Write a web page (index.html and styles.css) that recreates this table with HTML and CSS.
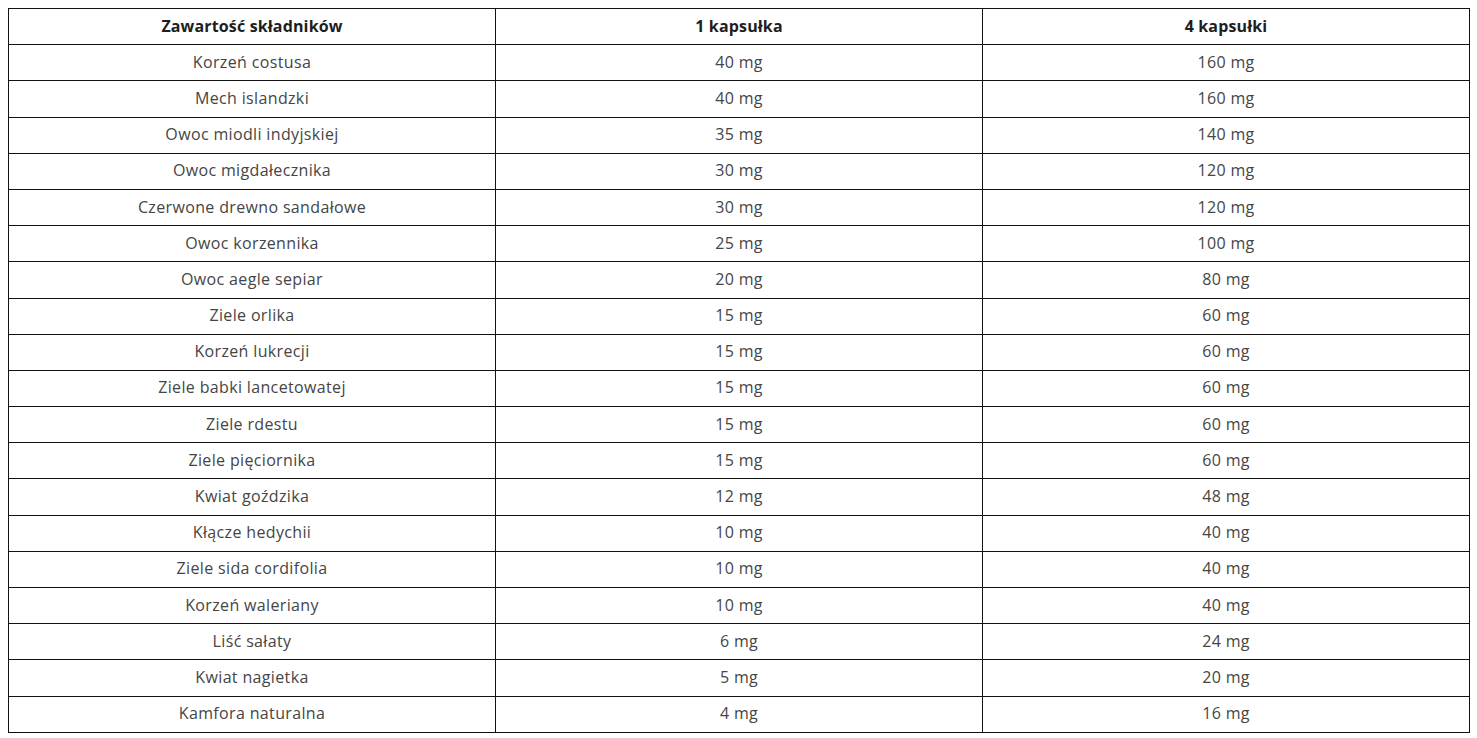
FILE: index.html
```html
<!DOCTYPE html>
<html lang="pl">
<head>
<meta charset="utf-8">
<link rel="stylesheet" href="styles.css">
</head>
<body>
<table class="tbl">
<thead>
<tr><th>Zawartość składników</th><th>1 kapsułka</th><th>4 kapsułki</th></tr>
</thead>
<tbody>
<tr><td>Korzeń costusa</td><td>40 mg</td><td>160 mg</td></tr>
<tr><td>Mech islandzki</td><td>40 mg</td><td>160 mg</td></tr>
<tr><td>Owoc miodli indyjskiej</td><td>35 mg</td><td>140 mg</td></tr>
<tr><td>Owoc migdałecznika</td><td>30 mg</td><td>120 mg</td></tr>
<tr><td>Czerwone drewno sandałowe</td><td>30 mg</td><td>120 mg</td></tr>
<tr><td>Owoc korzennika</td><td>25 mg</td><td>100 mg</td></tr>
<tr><td>Owoc aegle sepiar</td><td>20 mg</td><td>80 mg</td></tr>
<tr><td>Ziele orlika</td><td>15 mg</td><td>60 mg</td></tr>
<tr><td>Korzeń lukrecji</td><td>15 mg</td><td>60 mg</td></tr>
<tr><td>Ziele babki lancetowatej</td><td>15 mg</td><td>60 mg</td></tr>
<tr><td>Ziele rdestu</td><td>15 mg</td><td>60 mg</td></tr>
<tr><td>Ziele pięciornika</td><td>15 mg</td><td>60 mg</td></tr>
<tr><td>Kwiat goździka</td><td>12 mg</td><td>48 mg</td></tr>
<tr><td>Kłącze hedychii</td><td>10 mg</td><td>40 mg</td></tr>
<tr><td>Ziele sida cordifolia</td><td>10 mg</td><td>40 mg</td></tr>
<tr><td>Korzeń waleriany</td><td>10 mg</td><td>40 mg</td></tr>
<tr><td>Liść sałaty</td><td>6 mg</td><td>24 mg</td></tr>
<tr><td>Kwiat nagietka</td><td>5 mg</td><td>20 mg</td></tr>
<tr><td>Kamfora naturalna</td><td>4 mg</td><td>16 mg</td></tr>
</tbody>
</table>
</body>
</html>
```

FILE: styles.css
```css
html, body {
  margin: 0;
  padding: 0;
  background: #ffffff;
}
body {
  padding: 8px 7px 8px 8px;
  font-family: "Open Sans", "Noto Sans", sans-serif;
}
.tbl {
  width: 1462px;
  border-collapse: collapse;
  table-layout: fixed;
}
.tbl th,
.tbl td {
  border: 1px solid #111;
  height: 33.2px;
  padding: 0 8px 2px;
  text-align: center;
  vertical-align: middle;
  font-size: 16px;
  line-height: 20px;
}
.tbl th {
  font-weight: 700;
  color: #1e1e1e;
  letter-spacing: 0.15px;
}
.tbl td {
  font-weight: 400;
  color: #454545;
  letter-spacing: 0.35px;
}
```
